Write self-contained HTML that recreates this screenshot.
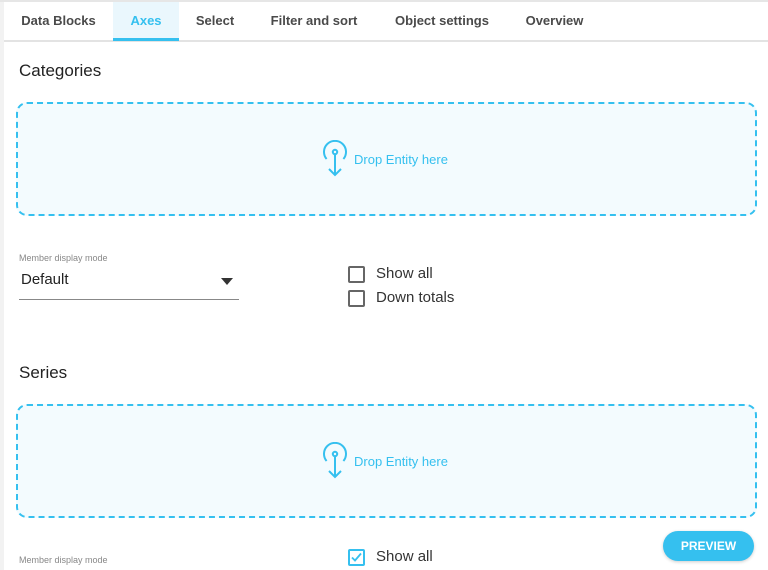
<!DOCTYPE html>
<html><head><meta charset="utf-8"><style>
*{margin:0;padding:0;box-sizing:border-box}
body{width:768px;height:570px;overflow:hidden;background:#fff;font-family:"Liberation Sans",sans-serif;position:relative;color:#222}
.strip{position:absolute;left:0;top:0;width:4px;height:570px;background:#f2f2f2}
.topline{position:absolute;left:0;top:0;width:768px;height:2px;background:#e6e6e6}
.tabline{position:absolute;left:4px;top:40px;width:764px;height:2px;background:#e3e3e3}
.tab{position:absolute;top:2px;height:38px;line-height:38px;font-size:13px;font-weight:bold;color:#4a4a4a;text-align:center}
.active{background:#eaf7fd;color:#35c0ef;border-bottom:3px solid #35c0ef;height:39px;line-height:37px}
.h{position:absolute;left:19px;font-size:17px;color:#222}
.drop{position:absolute;left:16px;width:741px;height:114px;border:2px dashed #35c0ef;border-radius:11px;background:#f3fbfe}
.dt{position:absolute;left:336px;top:48px;font-size:13px;color:#35c0ef}
.ic{position:absolute;left:302px;top:36px}
.lbl{position:absolute;left:19px;font-size:9px;color:#888}
.sel{position:absolute;left:21px;font-size:15px;color:#222}
.uline{position:absolute;left:19px;width:220px;height:1px;background:#888}
.arr{position:absolute;left:221px;width:0;height:0;border-left:6px solid transparent;border-right:6px solid transparent;border-top:7px solid #333}
.cb{position:absolute;left:348px;width:17px;height:17px;border:2px solid #666;border-radius:2px}
.cl{position:absolute;left:376px;font-size:15px;color:#333}
.btn{position:absolute;left:663px;top:531px;width:91px;height:30px;border-radius:15px;background:#35c0ef;color:#fff;font-weight:bold;font-size:12px;text-align:center;line-height:30px;box-shadow:0 1px 3px rgba(0,0,0,.2)}
</style></head><body>
<div class="strip"></div><div class="topline"></div><div class="tabline"></div>
<div class="tab" style="left:4px;width:109px">Data Blocks</div>
<div class="tab active" style="left:113px;width:66px">Axes</div>
<div class="tab" style="left:179px;width:72px">Select</div>
<div class="tab" style="left:251px;width:126px">Filter and sort</div>
<div class="tab" style="left:377px;width:130px">Object settings</div>
<div class="tab" style="left:507px;width:95px">Overview</div>

<div class="h" style="top:61px">Categories</div>
<div class="drop" style="top:102px">
<svg class="ic" width="30" height="38" viewBox="0 0 30 38" fill="none" stroke="#35c0ef" stroke-width="2"><path d="M6.6 19 A11 11 0 1 1 23.4 19"/><circle cx="15" cy="12" r="2.2"/><path d="M15 14 V35 M9 29 L15 35 L21 29"/></svg>
<div class="dt">Drop Entity here</div></div>

<div class="lbl" style="top:253px">Member display mode</div>
<div class="sel" style="top:271px">Default</div>
<div class="arr" style="top:278px"></div>
<div class="uline" style="top:299px"></div>
<div class="cb" style="top:266px"></div><div class="cl" style="top:265px">Show all</div>
<div class="cb" style="top:290px"></div><div class="cl" style="top:289px">Down totals</div>

<div class="h" style="top:363px">Series</div>
<div class="drop" style="top:404px">
<svg class="ic" width="30" height="38" viewBox="0 0 30 38" fill="none" stroke="#35c0ef" stroke-width="2"><path d="M6.6 19 A11 11 0 1 1 23.4 19"/><circle cx="15" cy="12" r="2.2"/><path d="M15 14 V35 M9 29 L15 35 L21 29"/></svg>
<div class="dt">Drop Entity here</div></div>

<div class="lbl" style="top:555px">Member display mode</div>
<div class="cb" style="top:549px;border-color:#35c0ef"><svg width="13" height="13" viewBox="0 0 13 13" style="position:absolute;left:0;top:0"><path d="M2 6.5 L5 9.5 L11 2.5" fill="none" stroke="#35c0ef" stroke-width="1.8"/></svg></div>
<div class="cl" style="top:548px">Show all</div>
<div class="btn">PREVIEW</div>
</body></html>
